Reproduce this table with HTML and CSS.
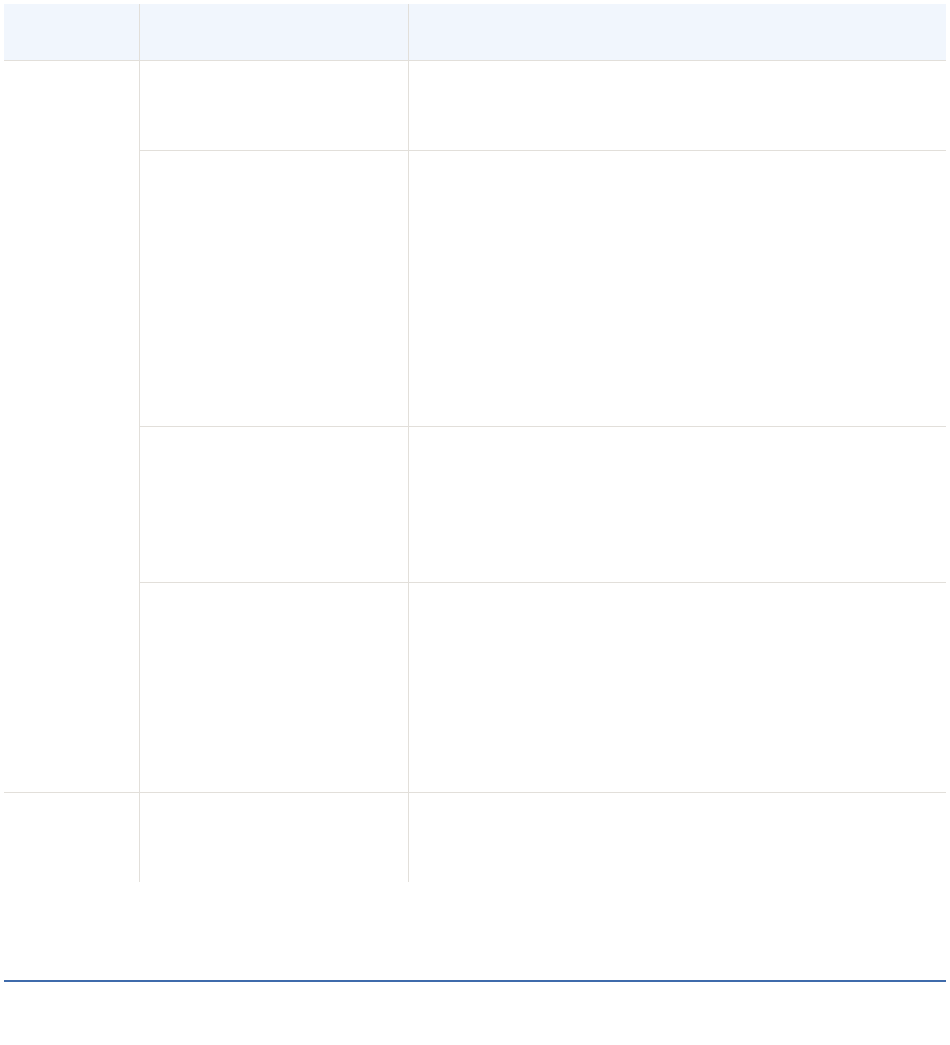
FILE: index.html
```html
<!DOCTYPE html>
<html lang="en">
<head>
  <meta charset="UTF-8">
  <meta name="viewport" content="width=device-width, initial-scale=1.0">
  <title>Table</title>
  <link rel="stylesheet" href="styles.css">
</head>
<body>
  <table class="grid">
    <colgroup>
      <col class="col-a">
      <col class="col-b">
      <col class="col-c">
    </colgroup>
    <thead>
      <tr class="head-row">
        <th></th>
        <th class="sep"></th>
        <th class="sep"></th>
      </tr>
    </thead>
    <tbody>
      <tr class="row-1">
        <td rowspan="4"></td>
        <td class="sep"></td>
        <td class="sep"></td>
      </tr>
      <tr class="row-2">
        <td class="sep line"></td>
        <td class="sep line"></td>
      </tr>
      <tr class="row-3">
        <td class="sep line"></td>
        <td class="sep line"></td>
      </tr>
      <tr class="row-4">
        <td class="sep line"></td>
        <td class="sep line"></td>
      </tr>
      <tr class="row-5">
        <td class="line"></td>
        <td class="sep line"></td>
        <td class="sep line"></td>
      </tr>
    </tbody>
  </table>
  <div class="rule"></div>
</body>
</html>
```

FILE: styles.css
```css
body {
  margin: 4px;
  font-family: "Liberation Sans", Arial, sans-serif;
  background: #fff;
}
.grid {
  width: 942px;
  border-collapse: collapse;
  table-layout: fixed;
}
.col-a {
  width: 135px;
}
.col-b {
  width: 269px;
}
.grid th,
.grid td {
  padding: 0;
}
.grid th {
  background: #f1f6fd;
  border-bottom: 1px solid #e2dfda;
}
.grid .sep {
  border-left: 1px solid #e2dfda;
}
.grid .line {
  border-top: 1px solid #e2dfda;
}
.head-row {
  height: 56px;
}
.row-1 {
  height: 90px;
}
.row-2 {
  height: 276px;
}
.row-3 {
  height: 156px;
}
.row-4 {
  height: 210px;
}
.row-5 {
  height: 90px;
}
.rule {
  height: 2px;
  margin-top: 98px;
  background: #3f6bab;
}
```
